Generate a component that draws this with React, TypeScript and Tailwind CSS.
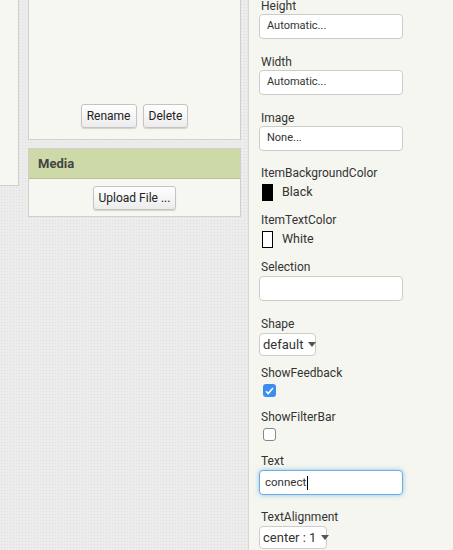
import React from "react"

const font = { fontFamily: "Roboto, 'Liberation Sans', Arial, sans-serif" }

function Btn({ children }: { children: React.ReactNode }) {
  return (
    <button className="h-[24px] whitespace-nowrap rounded-[3px] border border-[#c4c4c4] bg-gradient-to-b from-white to-[#ececec] px-[5px] text-[12px] leading-none text-[#222] shadow-[0_1px_1px_rgba(0,0,0,0.15)]">
      {children}
    </button>
  )
}

function Label({ children }: { children: React.ReactNode }) {
  return <div className="ml-[2px] text-[12px] leading-[14px] text-[#333]">{children}</div>
}

function TextBox({ value }: { value: string }) {
  return (
    <div className="mt-px flex h-[25px] w-[144px] items-center rounded-[4px] border border-[#ccc] bg-white px-[7px] text-[11px] text-[#333]">
      {value}
    </div>
  )
}

function Caret() {
  return <span className="ml-px inline-block h-[14px] w-px bg-black" />
}

function Select({ value, w }: { value: string; w: string }) {
  return (
    <div className={`mt-[2px] flex h-[23px] shrink-0 items-center gap-[5px] whitespace-nowrap rounded-[4px] border border-[#ccc] bg-white pl-[3px] text-[13px] text-[#333] ${w}`}>
      {value}
      <svg width="8" height="5" viewBox="0 0 8 5" className="shrink-0">
        <path d="M0 0h8L4 5z" fill="#555" />
      </svg>
    </div>
  )
}

function Swatch({ color, name }: { color: "black" | "white"; name: string }) {
  return (
    <div className="mt-[4px] flex h-[17px] items-center gap-[9px] pl-[3px]">
      <div
        className={
          color === "black"
            ? "h-[17px] w-[11px] bg-black"
            : "h-[17px] w-[11px] border border-black bg-white"
        }
      />
      <span className="text-[12.5px] text-[#333]">{name}</span>
    </div>
  )
}

export default function App() {
  return (
    <div
      className="flex h-[550px] w-[453px] overflow-hidden bg-[#ececec] bg-[radial-gradient(#dedede_0.7px,transparent_0.8px)] bg-[length:3px_3px]"
      style={font}
    >
      {/* Left stub panel */}
      <div className="h-[186px] w-[19px] shrink-0 border-r border-b border-[#cfcfcf] bg-[#f7f7f2]" />

      {/* Middle column */}
      <div className="ml-[9px] flex w-[213px] shrink-0 flex-col">
        <div className="flex h-[140px] items-end justify-center gap-[6px] border-x border-b border-[#cfcfcf] bg-[#f7f7f2] pb-[11px]">
          <Btn>Rename</Btn>
          <Btn>Delete</Btn>
        </div>
        <div className="mt-[8px] border border-[#cfcfcf] bg-[#f7f7f2]">
          <div className="flex h-[30px] items-center border-b border-[#b5bf9c] bg-[#cdd9a7] pl-[9px] text-[13px] font-bold text-[#444]">
            Media
          </div>
          <div className="flex justify-center pt-[7px] pb-[6px]">
            <Btn>Upload File ...</Btn>
          </div>
        </div>
      </div>

      {/* Properties panel */}
      <div className="ml-[7px] flex-1 border-l border-[#d6d6d6] bg-[#f6f6f0] pl-[10px] pt-0">
        <div className="-mt-px">
          <Label>Height</Label>
          <TextBox value="Automatic..." />
        </div>
        <div className="mt-[16px]">
          <Label>Width</Label>
          <TextBox value="Automatic..." />
        </div>
        <div className="mt-[16px]">
          <Label>Image</Label>
          <TextBox value="None..." />
        </div>
        <div className="mt-[15px]">
          <Label>ItemBackgroundColor</Label>
          <Swatch color="black" name="Black" />
        </div>
        <div className="mt-[12px]">
          <Label>ItemTextColor</Label>
          <Swatch color="white" name="White" />
        </div>
        <div className="mt-[12px]">
          <Label>Selection</Label>
          <div className="mt-[2px]">
            <TextBox value="" />
          </div>
        </div>
        <div className="mt-[16px]">
          <Label>Shape</Label>
          <Select value="default" w="w-[57px]" />
        </div>
        <div className="mt-[10px]">
          <Label>ShowFeedback</Label>
          <div className="mt-[4px] ml-[4px] flex h-[13px] w-[13px] items-center justify-center rounded-[3px] bg-[#3b8eef]">
            <svg width="9" height="8" viewBox="0 0 9 8">
              <path d="M1 4.2l2.2 2.3L8 1" fill="none" stroke="white" strokeWidth="1.6" />
            </svg>
          </div>
        </div>
        <div className="mt-[13px]">
          <Label>ShowFilterBar</Label>
          <div className="mt-[4px] ml-[4px] h-[13px] w-[13px] rounded-[3px] border border-[#888] bg-white" />
        </div>
        <div className="mt-[13px]">
          <Label>Text</Label>
          <div className="mt-[2px] flex h-[25px] w-[144px] items-center rounded-[4px] border border-[#66afe9] bg-white px-[5px] text-[11.5px] text-[#333] shadow-[0_0_5px_rgba(102,175,233,0.7)]">
            connect
            <Caret />
          </div>
        </div>
        <div className="mt-[15px]">
          <Label>TextAlignment</Label>
          <Select value="center : 1" w="w-[68px]" />
        </div>
      </div>
    </div>
  )
}
